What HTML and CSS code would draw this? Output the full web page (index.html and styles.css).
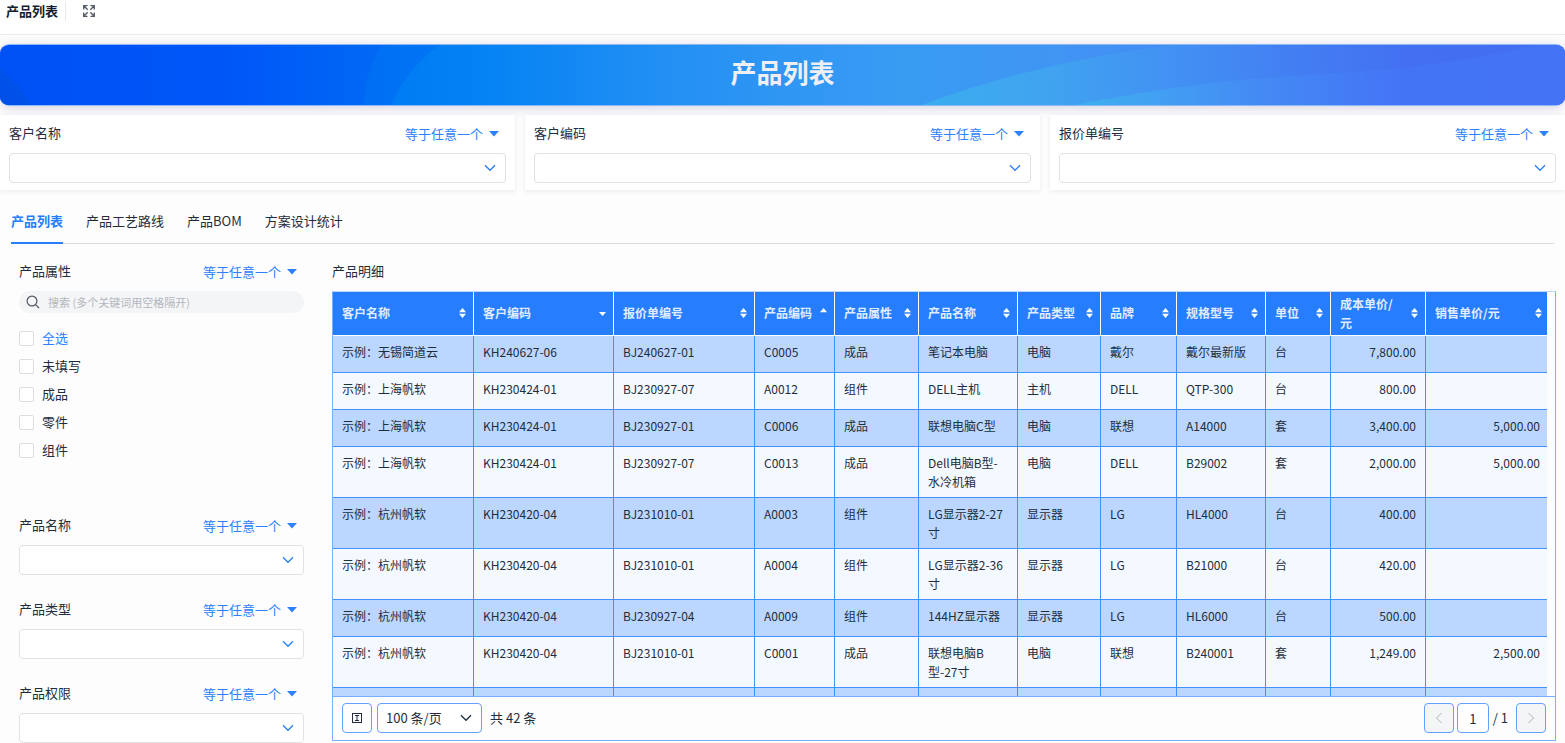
FILE: index.html
```html
<!DOCTYPE html>
<html lang="zh-CN">
<head>
<meta charset="UTF-8">
<title>产品列表</title>
<link rel="stylesheet" href="styles.css">
</head>
<body>
  <!-- 公用图标 -->
  <svg class="icon-defs" aria-hidden="true">
    <symbol id="chevron" viewBox="0 0 12 8"><path d="M1 1.3l5 5 5-5" fill="none" stroke="currentColor" stroke-width="1.3"/></symbol>
    <symbol id="caret" viewBox="0 0 10 6"><path d="M0 0h10L5 5.6z" fill="currentColor"/></symbol>
    <symbol id="sort" viewBox="0 0 7 10"><path d="M0 4.2L3.5 0 7 4.2zM0 5.8L3.5 10 7 5.8z" fill="currentColor"/></symbol>
    <symbol id="sort-up" viewBox="0 0 7 10"><path d="M0 4.2L3.5 0 7 4.2z" fill="currentColor"/></symbol>
    <symbol id="sort-down" viewBox="0 0 7 10"><path d="M0 4h7L3.500 8z" fill="currentColor"/></symbol>
  </svg>

  <header class="topbar">
    <span class="topbar-title">产品列表</span>
    <button class="fullscreen" type="button" aria-label="全屏">
      <svg viewBox="0 0 12 12" width="12" height="12" fill="none" stroke="currentColor" stroke-width="1.3">
        <path d="M4.500 .7H.7V4.500M.7.7l4 4M7.500 .7h3.800V4.500M11.300.7l-4 4M.7 7.500v3.800H4.500M.7 11.300l4-4M11.300 7.500v3.800H7.500M11.300 11.300l-4-4"/>
      </svg>
    </button>
  </header>

  <main class="page">
    <div class="banner">
      <svg class="banner-bg" viewBox="0 0 1565 61" preserveAspectRatio="none" aria-hidden="true">
        <defs>
          <linearGradient id="base" gradientUnits="userSpaceOnUse" x1="0" y1="0" x2="1565" y2="0">
            <stop offset="0" stop-color="#0051f6"/>
            <stop offset=".15" stop-color="#0057f8"/>
            <stop offset=".25" stop-color="#006af4"/>
            <stop offset=".33" stop-color="#0b84f3"/>
            <stop offset=".42" stop-color="#218ff4"/>
            <stop offset=".5" stop-color="#2f96f3"/>
            <stop offset=".58" stop-color="#389cf3"/>
            <stop offset=".68" stop-color="#4194f3"/>
            <stop offset=".8" stop-color="#4385f3"/>
            <stop offset=".9" stop-color="#436ef1"/>
            <stop offset="1" stop-color="#4169ee"/>
          </linearGradient>
          <linearGradient id="ringOuter" gradientUnits="userSpaceOnUse" x1="363" y1="0" x2="520" y2="0">
            <stop offset="0" stop-color="#006ef4"/>
            <stop offset=".5" stop-color="#0076f4"/>
            <stop offset="1" stop-color="#0b84f3"/>
          </linearGradient>
          <linearGradient id="ringInner" gradientUnits="userSpaceOnUse" x1="391" y1="0" x2="560" y2="0">
            <stop offset="0" stop-color="#007cf4"/>
            <stop offset=".5" stop-color="#0382f4"/>
            <stop offset="1" stop-color="#1188f3"/>
          </linearGradient>
          <linearGradient id="waveTop" gradientUnits="userSpaceOnUse" x1="922" y1="40" x2="1500" y2="0">
            <stop offset="0" stop-color="#3badee"/>
            <stop offset=".22" stop-color="#40a3f0"/>
            <stop offset=".42" stop-color="#4292f3"/>
            <stop offset=".65" stop-color="#437ef3"/>
            <stop offset=".85" stop-color="#436ff1"/>
            <stop offset="1" stop-color="#436ef1"/>
          </linearGradient>
          <linearGradient id="waveBottom" gradientUnits="userSpaceOnUse" x1="1075" y1="61" x2="1530" y2="40">
            <stop offset="0" stop-color="#3eb0ee"/>
            <stop offset=".18" stop-color="#42a0f2"/>
            <stop offset=".42" stop-color="#4489f4"/>
            <stop offset=".72" stop-color="#4474f6"/>
            <stop offset="1" stop-color="#4474f5"/>
          </linearGradient>
        </defs>
        <path fill="url(#base)" d="M0 0h1565v61H0z"/>
        <path fill="#0051ea" d="M0 24Q20 40 32 61H0z"/>
        <path fill="url(#ringOuter)" d="M382 0Q366 26 363 61H520V0z"/>
        <path fill="url(#ringInner)" d="M440 0Q408 22 391 61H560V0z"/>
        <path fill="url(#waveTop)" d="M922 61Q1035 18 1170 0H1565V61z"/>
        <path fill="url(#waveBottom)" d="M1075 61C1170 42 1240 34 1330 29S1490 12 1535 0H1565V61z"/>
      </svg>
      <h1>产品列表</h1>
    </div>

    <section class="filters">
      <div class="filter card">
        <div class="field-head">
          <label for="f1">客户名称</label>
          <button class="operator" type="button">等于任意一个<svg width="10" height="6"><use href="#caret"/></svg></button>
        </div>
        <div class="select"><select id="f1"><option></option></select><svg width="12" height="8"><use href="#chevron"/></svg></div>
      </div>
      <div class="filter card">
        <div class="field-head">
          <label for="f2">客户编码</label>
          <button class="operator" type="button">等于任意一个<svg width="10" height="6"><use href="#caret"/></svg></button>
        </div>
        <div class="select"><select id="f2"><option></option></select><svg width="12" height="8"><use href="#chevron"/></svg></div>
      </div>
      <div class="filter card">
        <div class="field-head">
          <label for="f3">报价单编号</label>
          <button class="operator" type="button">等于任意一个<svg width="10" height="6"><use href="#caret"/></svg></button>
        </div>
        <div class="select"><select id="f3"><option></option></select><svg width="12" height="8"><use href="#chevron"/></svg></div>
      </div>
    </section>

    <section class="content">
      <nav class="tabs">
        <button class="tab active" type="button">产品列表</button>
        <button class="tab" type="button">产品工艺路线</button>
        <button class="tab" type="button">产品BOM</button>
        <button class="tab" type="button">方案设计统计</button>
      </nav>

      <div class="columns">
        <aside class="sidebar">
          <div class="filter filter-list">
            <div class="field-head">
              <label for="search">产品属性</label>
              <button class="operator" type="button">等于任意一个<svg width="10" height="6"><use href="#caret"/></svg></button>
            </div>
            <div class="search">
              <svg viewBox="0 0 14 14" width="14" height="14" fill="none" stroke="currentColor" stroke-width="1.2"><circle cx="6" cy="6" r="4.900"/><path d="M9.600 9.600L13 13"/></svg>
              <input id="search" type="text" placeholder="搜索 (多个关键词用空格隔开)">
            </div>
            <div class="checks">
              <label class="check check-all"><input type="checkbox">全选</label>
              <label class="check"><input type="checkbox">未填写</label>
              <label class="check"><input type="checkbox">成品</label>
              <label class="check"><input type="checkbox">零件</label>
              <label class="check"><input type="checkbox">组件</label>
            </div>
          </div>
          <div class="filter">
            <div class="field-head">
              <label for="f4">产品名称</label>
              <button class="operator" type="button">等于任意一个<svg width="10" height="6"><use href="#caret"/></svg></button>
            </div>
            <div class="select"><select id="f4"><option></option></select><svg width="12" height="8"><use href="#chevron"/></svg></div>
          </div>
          <div class="filter">
            <div class="field-head">
              <label for="f5">产品类型</label>
              <button class="operator" type="button">等于任意一个<svg width="10" height="6"><use href="#caret"/></svg></button>
            </div>
            <div class="select"><select id="f5"><option></option></select><svg width="12" height="8"><use href="#chevron"/></svg></div>
          </div>
          <div class="filter">
            <div class="field-head">
              <label for="f6">产品权限</label>
              <button class="operator" type="button">等于任意一个<svg width="10" height="6"><use href="#caret"/></svg></button>
            </div>
            <div class="select"><select id="f6"><option></option></select><svg width="12" height="8"><use href="#chevron"/></svg></div>
          </div>
        </aside>

        <section class="detail">
          <h2>产品明细</h2>
          <div class="grid">
            <div class="grid-body">
              <table>
                <colgroup>
                  <col class="w-name"><col class="w-code"><col class="w-quote"><col class="w-pcode"><col class="w-attr"><col class="w-pname">
                  <col class="w-type"><col class="w-brand"><col class="w-spec"><col class="w-unit"><col class="w-cost"><col class="w-price">
                </colgroup>
                <thead>
                  <tr>
                    <th><div class="th">客户名称<svg width="7" height="10"><use href="#sort"/></svg></div></th>
                    <th><div class="th">客户编码<svg width="7" height="10"><use href="#sort-down"/></svg></div></th>
                    <th><div class="th">报价单编号<svg width="7" height="10"><use href="#sort"/></svg></div></th>
                    <th><div class="th">产品编码<svg width="7" height="10"><use href="#sort-up"/></svg></div></th>
                    <th><div class="th">产品属性<svg width="7" height="10"><use href="#sort"/></svg></div></th>
                    <th><div class="th">产品名称<svg width="7" height="10"><use href="#sort"/></svg></div></th>
                    <th><div class="th">产品类型<svg width="7" height="10"><use href="#sort"/></svg></div></th>
                    <th><div class="th">品牌<svg width="7" height="10"><use href="#sort"/></svg></div></th>
                    <th><div class="th">规格型号<svg width="7" height="10"><use href="#sort"/></svg></div></th>
                    <th><div class="th">单位<svg width="7" height="10"><use href="#sort"/></svg></div></th>
                    <th><div class="th">成本单价/元<svg width="7" height="10"><use href="#sort"/></svg></div></th>
                    <th><div class="th">销售单价/元<svg width="7" height="10"><use href="#sort"/></svg></div></th>
                  </tr>
                </thead>
                <tbody>
                  <tr><td>示例：无锡简道云</td><td>KH240627-06</td><td>BJ240627-01</td><td>C0005</td><td>成品</td><td>笔记本电脑</td><td>电脑</td><td>戴尔</td><td>戴尔最新版</td><td>台</td><td class="num">7,800.00</td><td class="num"></td></tr>
                  <tr><td>示例：上海帆软</td><td>KH230424-01</td><td>BJ230927-07</td><td>A0012</td><td>组件</td><td>DELL主机</td><td>主机</td><td>DELL</td><td>QTP-300</td><td>台</td><td class="num">800.00</td><td class="num"></td></tr>
                  <tr><td>示例：上海帆软</td><td>KH230424-01</td><td>BJ230927-01</td><td>C0006</td><td>成品</td><td>联想电脑C型</td><td>电脑</td><td>联想</td><td>A14000</td><td>套</td><td class="num">3,400.00</td><td class="num">5,000.00</td></tr>
                  <tr><td>示例：上海帆软</td><td>KH230424-01</td><td>BJ230927-07</td><td>C0013</td><td>成品</td><td>Dell电脑B型-水冷机箱</td><td>电脑</td><td>DELL</td><td>B29002</td><td>套</td><td class="num">2,000.00</td><td class="num">5,000.00</td></tr>
                  <tr><td>示例：杭州帆软</td><td>KH230420-04</td><td>BJ231010-01</td><td>A0003</td><td>组件</td><td>LG显示器2-27寸</td><td>显示器</td><td>LG</td><td>HL4000</td><td>台</td><td class="num">400.00</td><td class="num"></td></tr>
                  <tr><td>示例：杭州帆软</td><td>KH230420-04</td><td>BJ231010-01</td><td>A0004</td><td>组件</td><td>LG显示器2-36寸</td><td>显示器</td><td>LG</td><td>B21000</td><td>台</td><td class="num">420.00</td><td class="num"></td></tr>
                  <tr><td>示例：杭州帆软</td><td>KH230420-04</td><td>BJ230927-04</td><td>A0009</td><td>组件</td><td>144HZ显示器</td><td>显示器</td><td>LG</td><td>HL6000</td><td>台</td><td class="num">500.00</td><td class="num"></td></tr>
                  <tr><td>示例：杭州帆软</td><td>KH230420-04</td><td>BJ231010-01</td><td>C0001</td><td>成品</td><td>联想电脑B型-27寸</td><td>电脑</td><td>联想</td><td>B240001</td><td>套</td><td class="num">1,249.00</td><td class="num">2,500.00</td></tr>
                  <tr><td></td><td></td><td></td><td></td><td></td><td></td><td></td><td></td><td></td><td></td><td></td><td></td></tr>
                </tbody>
              </table>
            </div>
            <footer class="pager">
              <button class="box" type="button" aria-label="行高">
                <svg viewBox="0 0 12 12" width="12" height="12" fill="none" stroke="currentColor"><rect x="1.500" y="1.500" width="9" height="9"/><path d="M4 3.500h4M4 8.500h4M6 3.500v5"/></svg>
              </button>
              <div class="select page-size">
                <select aria-label="每页条数"><option>100 条/页</option></select>
                <svg width="12" height="8"><use href="#chevron"/></svg>
              </div>
              <span class="total">共 42 条</span>
              <button class="box off" type="button" disabled aria-label="上一页"><svg viewBox="0 0 8 12" width="8" height="12" fill="none" stroke="currentColor"><path d="M6.500 1l-5 5 5 5"/></svg></button>
              <input class="page-no" type="text" value="1" aria-label="页码">
              <span class="page-total">/ 1</span>
              <button class="box off" type="button" disabled aria-label="下一页"><svg viewBox="0 0 8 12" width="8" height="12" fill="none" stroke="currentColor"><path d="M1.500 1l5 5-5 5"/></svg></button>
            </footer>
          </div>
        </section>
      </div>
    </section>
  </main>
</body>
</html>
```
FILE: styles.css
```css
* {
  box-sizing: border-box;
}
body {
  margin: 0;
  height: 100vh;
  display: flex;
  flex-direction: column;
  overflow: hidden;
  font-family: "Noto Sans CJK SC", "Noto Sans", sans-serif;
  font-size: 13px;
  line-height: 20px;
  color: #1f2d3d;
  background-color: #fff;
}
button, input, select {
  font: inherit;
  color: inherit;
  margin: 0;
}
button {
  padding: 0;
  border: none;
  background: none;
  cursor: pointer;
}
h1, h2 {
  margin: 0;
}
svg {
  flex: none;
}
.icon-defs {
  display: none;
}

/* 顶栏 */
.topbar {
  flex: none;
  display: flex;
  align-items: flex-start;
  height: 35px;
  padding: 1px 6px;
  border-bottom: 1px solid #ebecee;
}
.topbar-title {
  padding-right: 7px;
  border-right: 1px solid #e9e9eb;
  font-weight: bold;
  color: #141e31;
}
.fullscreen {
  display: flex;
  margin: 4px 17px;
  color: #525967;
}

.page {
  flex: 1;
  min-height: 0;
  display: flex;
  flex-direction: column;
  padding-top: 9px;
  background-color: #fdfdfe;
}

/* 横幅 */
.banner {
  flex: none;
  position: relative;
  height: 62px;
  border: solid #8bb9f8;
  border-width: 1px 0;
  border-radius: 9px;
  overflow: hidden;
  box-shadow: 0 2px 12px rgba(60, 40, 100, 0.2);
  text-align: center;
}
.banner-bg {
  position: absolute;
  inset: 0;
  width: 100%;
  height: 100%;
}
.banner h1 {
  position: relative;
  font-size: 26px;
  line-height: 54px;
  color: #eeeef3;
}

/* 筛选 */
.filters {
  flex: none;
  position: relative;
  display: grid;
  grid-template-columns: repeat(3, 1fr);
  gap: 10px;
  margin-top: 9px;
}
.card {
  padding: 8px 9px 7px;
  background-color: #fff;
  box-shadow: 0 1px 5px rgba(40, 40, 100, 0.09);
}
.field-head {
  display: flex;
  justify-content: space-between;
  height: 20px;
  margin-bottom: 10px;
  padding-right: 7px;
}
.operator {
  display: flex;
  align-items: center;
  gap: 6px;
  height: 22px;
  color: #2d80fe;
}
.select {
  position: relative;
  color: #267eff;
}
.select select {
  display: block;
  width: 100%;
  height: 30px;
  padding: 0 8px;
  border: 1px solid #e1e2e4;
  border-radius: 4px;
  background-color: #fff;
  color: #1f2d3d;
  appearance: none;
}
.select svg {
  position: absolute;
  right: 10px;
  top: 11px;
  pointer-events: none;
}

/* 页签 */
.content {
  position: relative;
  flex: 1;
  min-height: 0;
  display: flex;
  flex-direction: column;
  margin-top: 10px;
}
.tabs {
  flex: none;
  display: flex;
  gap: 23px;
  height: 44px;
  margin: 0 11px;
  border-bottom: 1px solid #d9dbde;
}
.tab {
  margin-bottom: -1px;
  padding-bottom: 1px;
  border-bottom: 2px solid transparent;
}
.tab.active {
  border-color: #267eff;
  color: #267eff;
  font-weight: bold;
}

.columns {
  flex: 1;
  min-height: 0;
  display: flex;
  gap: 28px;
  padding: 17px 9px 2px 19px;
}
.sidebar {
  flex: none;
  width: 285px;
  display: flex;
  flex-direction: column;
  gap: 24px;
}
.filter-list {
  flex: none;
  min-height: 230px;
}
.search {
  display: flex;
  align-items: center;
  gap: 8px;
  height: 22px;
  padding: 0 7px;
  border-radius: 11px;
  background-color: #f4f5f7;
  color: #525967;
}
.search input {
  flex: 1;
  padding: 0;
  border: none;
  outline: none;
  background: none;
  font-size: 11px;
  line-height: 20px;
}
.search input::placeholder {
  color: #b3b6bd;
}
.checks {
  margin-top: 11px;
}
.check {
  display: flex;
  align-items: center;
  gap: 8px;
  height: 28px;
}
.check input {
  width: 15px;
  height: 15px;
  border: 1px solid #dcdde0;
  border-radius: 2px;
  background-color: #fff;
  appearance: none;
}
.check-all {
  color: #2d80fe;
}

/* 明细表 */
.detail {
  flex: 1;
  min-width: 0;
  display: flex;
  flex-direction: column;
}
.detail h2 {
  margin-bottom: 10px;
  font-size: 13px;
  font-weight: normal;
  line-height: 20px;
}
.grid {
  flex: 1;
  min-height: 0;
  display: flex;
  flex-direction: column;
  border: 1px solid #7aafff;
  border-top-color: #b9d5ff;
}
.grid-body {
  flex: 1;
  min-height: 0;
  padding-right: 8px;
  overflow: hidden;
}
table {
  width: 100%;
  table-layout: fixed;
  border-spacing: 0;
  font-size: 12px;
  line-height: 19px;
}
.w-name, .w-quote { width: 141px; }
.w-code { width: 140px; }
.w-pcode { width: 80px; }
.w-attr { width: 84px; }
.w-pname { width: 99px; }
.w-type { width: 83px; }
.w-brand { width: 76px; }
.w-spec { width: 89px; }
.w-unit { width: 65px; }
.w-cost { width: 95px; }
.w-price { width: 121px; }
th {
  height: 44px;
  padding: 0 7px 2px 9px;
  border-right: 1px solid #fff;
  border-bottom: 1px solid #fff;
  background-color: #267eff;
  color: #e0ecff;
  font-weight: bold;
  text-align: left;
}
.th {
  display: flex;
  align-items: center;
  justify-content: space-between;
  gap: 8px;
}
.th svg {
  color: #fff;
}
td {
  height: 37px;
  padding: 6px 9px;
  border-right: 1px solid #4590ff;
  border-bottom: 1px solid #4590ff;
  background-color: #f4f9ff;
  vertical-align: top;
}
tbody tr:nth-child(odd) td {
  background-color: #bbd7ff;
}
th:last-child {
  padding-right: 5px;
  border-right: none;
}
td:last-child {
  padding-right: 7px;
  border-right: none;
}
.num {
  text-align: right;
}

/* 分页 */
.pager {
  flex: none;
  display: flex;
  align-items: center;
  height: 44px;
  padding: 0 9px 1px;
  border-top: 1px solid #7aafff;
}
.box, .page-no, .page-size select {
  height: 30px;
  border: 1px solid #62a1ff;
  border-radius: 4px;
}
.box {
  display: flex;
  align-items: center;
  justify-content: center;
  width: 30px;
}
.off {
  background-color: #f4f5f7;
  color: #aeb1b8;
}
.page-size {
  width: 105px;
  margin: 0 8px 0 5px;
  color: #1f2d3d;
}
.total {
  margin-right: auto;
}
.page-no {
  width: 32px;
  margin: 0 4px 0 3px;
  padding: 0;
  text-align: center;
}
.page-total {
  margin-right: 8px;
}
```
